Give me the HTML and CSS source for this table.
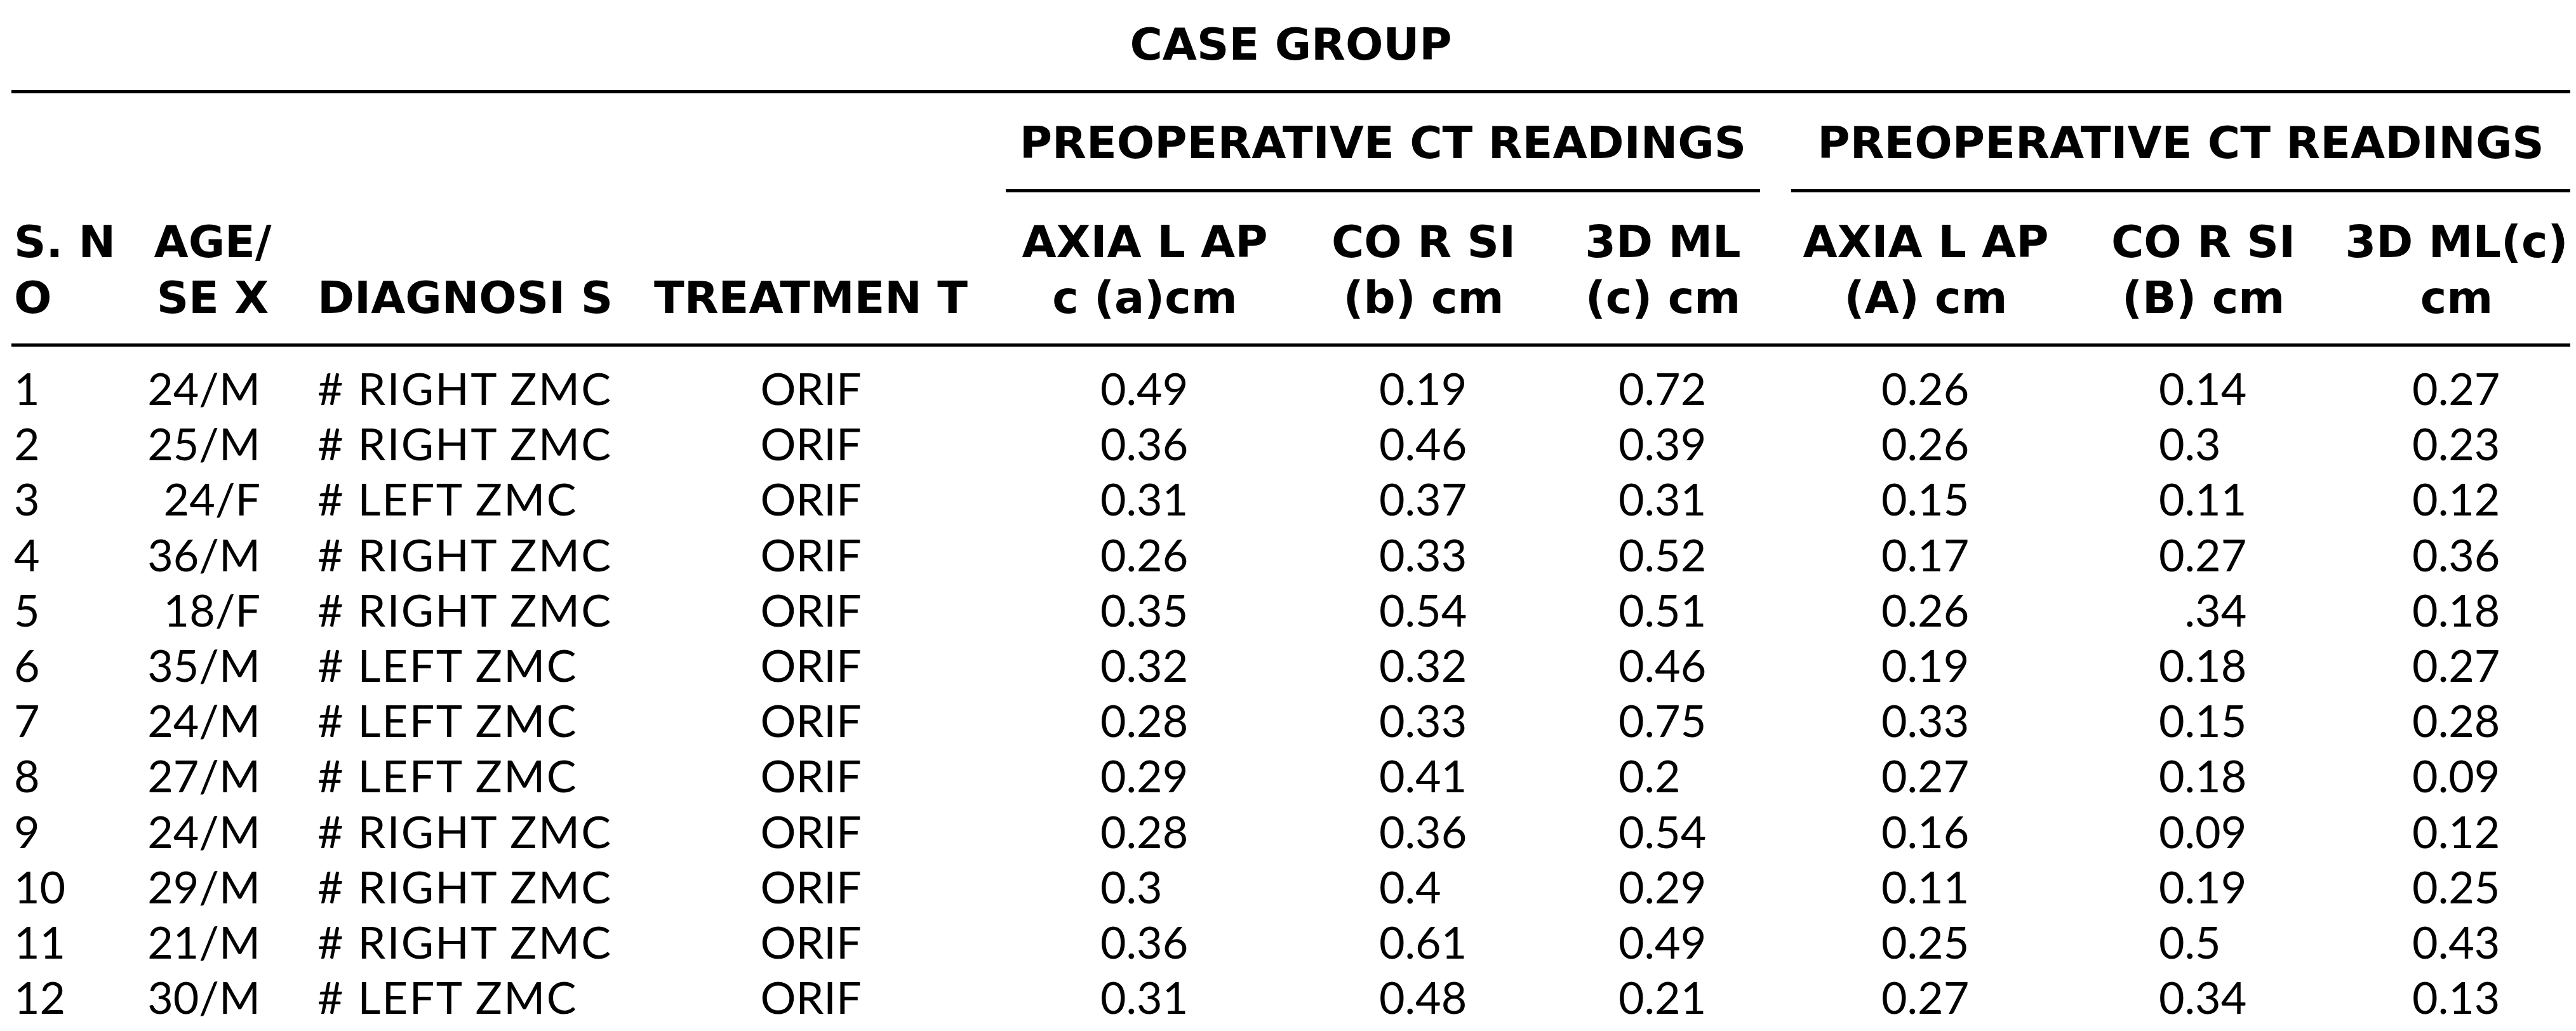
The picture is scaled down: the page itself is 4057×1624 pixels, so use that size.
FILE: index.html
```html
<!DOCTYPE html>
<html lang="en">
<head>
<meta charset="utf-8">
<title>Case group – preoperative CT readings</title>
<link rel="stylesheet" href="styles.css">
</head>
<body>
<div class="page">
<table class="ct-table">
  <colgroup>
    <col class="c-sno">
    <col class="c-age">
    <col class="c-diag">
    <col class="c-treat">
    <col class="c-ax1">
    <col class="c-cor1">
    <col class="c-3d1">
    <col class="c-ax2">
    <col class="c-cor2">
    <col class="c-3d2">
  </colgroup>
  <thead>
    <tr>
      <th colspan="10" class="caption-cell">CASE GROUP</th>
    </tr>
    <tr>
      <th rowspan="2" class="stub stub-sno">S. N<br>O</th>
      <th rowspan="2" class="stub stub-age">AGE/<br>SE X</th>
      <th rowspan="2" class="stub stub-diag">DIAGNOSI S</th>
      <th rowspan="2" class="stub stub-treat">TREATMEN T</th>
      <th colspan="3" class="group group-1"><div class="group-label">PREOPERATIVE CT READINGS</div></th>
      <th colspan="3" class="group group-2"><div class="group-label">PREOPERATIVE CT READINGS</div></th>
    </tr>
    <tr>
      <th class="sub">AXIA L AP<br>c (a)cm</th>
      <th class="sub">CO R SI<br>(b) cm</th>
      <th class="sub">3D ML<br>(c) cm</th>
      <th class="sub">AXIA L AP<br>(A) cm</th>
      <th class="sub">CO R SI<br>(B) cm</th>
      <th class="sub sub-last">3D ML(c)<br>cm</th>
    </tr>
  </thead>
  <tbody>
    <tr><td class="sno">1</td><td class="age">24/M</td><td class="diag"># RIGHT ZMC</td><td class="treat">ORIF</td><td class="num"><span class="v">0.49</span></td><td class="num"><span class="v">0.19</span></td><td class="num"><span class="v">0.72</span></td><td class="num"><span class="v">0.26</span></td><td class="num"><span class="v">0.14</span></td><td class="num last"><span class="v">0.27</span></td></tr>
    <tr><td class="sno">2</td><td class="age">25/M</td><td class="diag"># RIGHT ZMC</td><td class="treat">ORIF</td><td class="num"><span class="v">0.36</span></td><td class="num"><span class="v">0.46</span></td><td class="num"><span class="v">0.39</span></td><td class="num"><span class="v">0.26</span></td><td class="num"><span class="v">0.3</span></td><td class="num last"><span class="v">0.23</span></td></tr>
    <tr><td class="sno">3</td><td class="age">24/F</td><td class="diag"># LEFT ZMC</td><td class="treat">ORIF</td><td class="num"><span class="v">0.31</span></td><td class="num"><span class="v">0.37</span></td><td class="num"><span class="v">0.31</span></td><td class="num"><span class="v">0.15</span></td><td class="num"><span class="v">0.11</span></td><td class="num last"><span class="v">0.12</span></td></tr>
    <tr><td class="sno">4</td><td class="age">36/M</td><td class="diag"># RIGHT ZMC</td><td class="treat">ORIF</td><td class="num"><span class="v">0.26</span></td><td class="num"><span class="v">0.33</span></td><td class="num"><span class="v">0.52</span></td><td class="num"><span class="v">0.17</span></td><td class="num"><span class="v">0.27</span></td><td class="num last"><span class="v">0.36</span></td></tr>
    <tr><td class="sno">5</td><td class="age">18/F</td><td class="diag"># RIGHT ZMC</td><td class="treat">ORIF</td><td class="num"><span class="v">0.35</span></td><td class="num"><span class="v">0.54</span></td><td class="num"><span class="v">0.51</span></td><td class="num"><span class="v">0.26</span></td><td class="num"><span class="v indent">.34</span></td><td class="num last"><span class="v">0.18</span></td></tr>
    <tr><td class="sno">6</td><td class="age">35/M</td><td class="diag"># LEFT ZMC</td><td class="treat">ORIF</td><td class="num"><span class="v">0.32</span></td><td class="num"><span class="v">0.32</span></td><td class="num"><span class="v">0.46</span></td><td class="num"><span class="v">0.19</span></td><td class="num"><span class="v">0.18</span></td><td class="num last"><span class="v">0.27</span></td></tr>
    <tr><td class="sno">7</td><td class="age">24/M</td><td class="diag"># LEFT ZMC</td><td class="treat">ORIF</td><td class="num"><span class="v">0.28</span></td><td class="num"><span class="v">0.33</span></td><td class="num"><span class="v">0.75</span></td><td class="num"><span class="v">0.33</span></td><td class="num"><span class="v">0.15</span></td><td class="num last"><span class="v">0.28</span></td></tr>
    <tr><td class="sno">8</td><td class="age">27/M</td><td class="diag"># LEFT ZMC</td><td class="treat">ORIF</td><td class="num"><span class="v">0.29</span></td><td class="num"><span class="v">0.41</span></td><td class="num"><span class="v">0.2</span></td><td class="num"><span class="v">0.27</span></td><td class="num"><span class="v">0.18</span></td><td class="num last"><span class="v">0.09</span></td></tr>
    <tr><td class="sno">9</td><td class="age">24/M</td><td class="diag"># RIGHT ZMC</td><td class="treat">ORIF</td><td class="num"><span class="v">0.28</span></td><td class="num"><span class="v">0.36</span></td><td class="num"><span class="v">0.54</span></td><td class="num"><span class="v">0.16</span></td><td class="num"><span class="v">0.09</span></td><td class="num last"><span class="v">0.12</span></td></tr>
    <tr><td class="sno">10</td><td class="age">29/M</td><td class="diag"># RIGHT ZMC</td><td class="treat">ORIF</td><td class="num"><span class="v">0.3</span></td><td class="num"><span class="v">0.4</span></td><td class="num"><span class="v">0.29</span></td><td class="num"><span class="v">0.11</span></td><td class="num"><span class="v">0.19</span></td><td class="num last"><span class="v">0.25</span></td></tr>
    <tr><td class="sno">11</td><td class="age">21/M</td><td class="diag"># RIGHT ZMC</td><td class="treat">ORIF</td><td class="num"><span class="v">0.36</span></td><td class="num"><span class="v">0.61</span></td><td class="num"><span class="v">0.49</span></td><td class="num"><span class="v">0.25</span></td><td class="num"><span class="v">0.5</span></td><td class="num last"><span class="v">0.43</span></td></tr>
    <tr><td class="sno">12</td><td class="age">30/M</td><td class="diag"># LEFT ZMC</td><td class="treat">ORIF</td><td class="num"><span class="v">0.31</span></td><td class="num"><span class="v">0.48</span></td><td class="num"><span class="v">0.21</span></td><td class="num"><span class="v">0.27</span></td><td class="num"><span class="v">0.34</span></td><td class="num last"><span class="v">0.13</span></td></tr>
  </tbody>
</table>
</div>
</body>
</html>
```
FILE: styles.css
```css
html,
body {
  margin: 0;
  padding: 0;
  background: #ffffff;
}

body {
  color: #000000;
}

.page {
  padding: 26px 0 0 18px;
}

.ct-table {
  border-collapse: separate;
  border-spacing: 0;
  table-layout: fixed;
  width: 4030px;
  font-family: Lato, "Liberation Sans", sans-serif;
  font-size: 70px;
  color: #000000;
}

/* column widths */
.c-sno { width: 212px; }
.c-age { width: 210px; }
.c-diag { width: 530px; }
.c-treat { width: 614px; }
.c-ax1 { width: 438px; }
.c-cor1 { width: 440px; }
.c-3d1 { width: 314px; }
.c-ax2 { width: 514px; }
.c-cor2 { width: 360px; }
.c-3d2 { width: 398px; }

/* ---------- header ---------- */
.ct-table th {
  font-family: "DejaVu Sans", Lato, sans-serif;
  font-weight: 700;
  font-size: 70px;
  line-height: 88px;
  white-space: nowrap;
  padding: 0;
}

.caption-cell {
  text-align: center;
  padding-bottom: 28px !important;
  border-bottom: 5px solid #000000;
}

.stub {
  vertical-align: bottom;
  padding-bottom: 28px !important;
  border-bottom: 5px solid #000000;
}

.stub-sno {
  text-align: left;
  padding-left: 4px !important;
}

.stub-age {
  text-align: center;
}

.stub-diag {
  text-align: left;
  padding-left: 60px !important;
}

.stub-treat {
  text-align: center;
}

.group {
  vertical-align: top;
  padding-top: 34px !important;
}

.group-1 {
  padding-right: 4px !important;
}

.group-2 {
  padding-left: 45px !important;
}

.group-label {
  text-align: center;
  padding-bottom: 29px;
  border-bottom: 5px solid #000000;
}

.sub {
  text-align: center;
  vertical-align: top;
  padding-top: 34px !important;
  padding-bottom: 28px !important;
  border-bottom: 5px solid #000000;
}

.sub-last {
  padding-left: 40px !important;
}

/* ---------- body ---------- */
.ct-table td {
  padding: 0;
  font-weight: 400;
  line-height: 87.2px;
  white-space: nowrap;
  vertical-align: top;
}

.ct-table tbody tr:first-child td {
  padding-top: 22px;
}

.sno {
  text-align: left;
  padding-left: 4px !important;
}

.age {
  text-align: right;
  padding-right: 30px !important;
}

.diag {
  text-align: left;
  padding-left: 60px !important;
  letter-spacing: 0.035em;
}

.treat {
  text-align: center;
}

.num {
  text-align: center;
}

.num.last {
  padding-left: 40px !important;
}

.v {
  display: inline-block;
  width: 2em;
  text-align: left;
}

.v.indent {
  text-indent: 0.58em;
}
```
